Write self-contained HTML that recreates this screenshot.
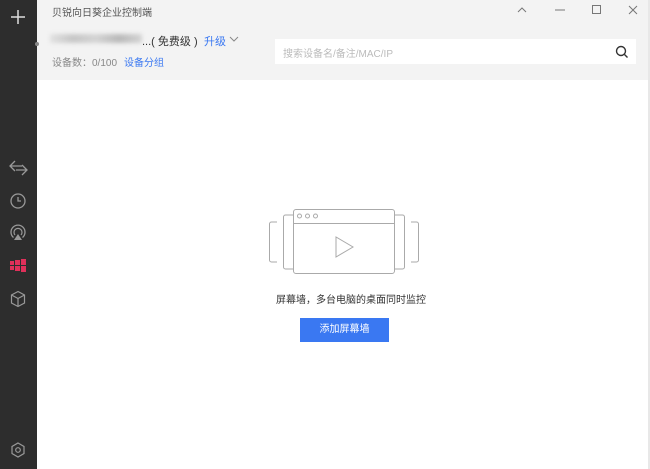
<!DOCTYPE html>
<html><head><meta charset="utf-8"><style>
*{margin:0;padding:0;box-sizing:border-box}
body{width:650px;height:469px;overflow:hidden;background:#fff;font-family:"Liberation Sans","Noto Sans CJK SC",sans-serif;position:relative}
.side{position:absolute;left:0;top:0;width:37px;height:469px;background:#2d2d2d}
.head{position:absolute;left:37px;top:0;width:613px;height:80px;background:#f3f3f3}
.t{position:absolute;font-size:10px;color:#555;white-space:nowrap}
svg{position:absolute}
</style></head><body>
<div class="side"></div>
<div class="head"></div>
<div style="position:absolute;left:648px;top:0;width:2px;height:469px;background:#e8e8e8"></div>
<svg style="left:10px;top:9px" width="16" height="16"><path d="M8 1v14M1 8h14" stroke="#ddd" stroke-width="1.5"/></svg>
<div style="position:absolute;left:35px;top:42px;width:4px;height:4px;border-radius:2px;background:#888"></div>
<div class="t" style="left:52px;top:4px;color:#555">贝锐向日葵企业控制端</div>
<div style="position:absolute;left:50px;top:34px;width:92px;height:9px;background:linear-gradient(90deg,#ddd,#bbb,#ccc,#aaa,#ccc);filter:blur(2px);opacity:.8"></div>
<div class="t" style="left:142px;top:33px;font-size:11px;color:#333">...( 免费级 )</div>
<div class="t" style="left:204px;top:33px;font-size:11px;color:#3a78f2">升级</div>
<svg style="left:229px;top:35px" width="10" height="8"><path d="M1 2l4 4 4-4" stroke="#888" fill="none"/></svg>
<div class="t" style="left:52px;top:54px;color:#888">设备数：0/100</div>
<div class="t" style="left:124px;top:54px;color:#3a78f2">设备分组</div>
<div style="position:absolute;left:275px;top:39px;width:361px;height:25px;background:#fff"></div>
<div class="t" style="left:283px;top:45px;color:#bbb">搜索设备名/备注/MAC/IP</div>
<svg style="left:615px;top:45px" width="14" height="14"><circle cx="6" cy="6" r="4.5" stroke="#333" stroke-width="1.4" fill="none"/><path d="M9.5 9.5l3 3" stroke="#333" stroke-width="1.4"/></svg>
<svg style="left:516px;top:5px" width="12" height="10"><path d="M2 7l4-4 4 4" stroke="#777" fill="none"/></svg>
<svg style="left:554px;top:5px" width="12" height="10"><path d="M1 5h10" stroke="#777"/></svg>
<svg style="left:591px;top:4px" width="12" height="12"><rect x="1.5" y="1.5" width="8" height="8" stroke="#777" fill="none"/></svg>
<svg style="left:627px;top:4px" width="12" height="12"><path d="M2 2l8 8M10 2l-8 8" stroke="#777"/></svg>
<svg style="left:8px;top:158px" width="22" height="20"><path d="M7 3L2 8l5 5M2 8h12M14 7l5 5-5 5M19 12H8" stroke="#999" stroke-width="1.3" fill="none"/></svg>
<svg style="left:9px;top:192px" width="18" height="18"><circle cx="9" cy="9" r="7" stroke="#999" stroke-width="1.3" fill="none"/><path d="M9 5v4h3" stroke="#999" stroke-width="1.3" fill="none"/></svg>
<svg style="left:9px;top:224px" width="18" height="18"><path d="M4.5 13.5A7 7 0 1 1 13.5 13.5" stroke="#999" stroke-width="1.3" fill="none"/><path d="M6 11A4 4 0 1 1 12 11" stroke="#999" stroke-width="1.2" fill="none"/><path d="M9 10l4 6H5z" fill="#999"/></svg>
<svg style="left:10px;top:259px" width="17" height="14"><g fill="#e0305a"><rect x="0" y="2" width="4" height="4"/><rect x="5" y="1" width="5" height="5"/><rect x="11" y="0" width="5" height="6"/><rect x="0" y="7" width="4" height="4"/><rect x="5" y="7" width="5" height="5"/><rect x="11" y="7" width="5" height="6"/></g></svg>
<svg style="left:9px;top:290px" width="18" height="18"><path d="M9 1.5l6.5 3.5v8L9 16.5 2.5 13V5z M2.5 5L9 8.5 15.5 5M9 8.5v8" stroke="#999" stroke-width="1.2" fill="none"/></svg>
<svg style="left:9px;top:441px" width="18" height="18"><path d="M9 2l6 3.5v7L9 16l-6-3.5v-7z" stroke="#999" stroke-width="1.2" fill="none"/><circle cx="9" cy="9" r="2.3" stroke="#999" stroke-width="1.2" fill="none"/></svg>
<svg style="left:268px;top:208px" width="152" height="70" fill="none" stroke="#aaa" stroke-width="1">
<path d="M9 14H3.5a2 2 0 0 0-2 2v36a2 2 0 0 0 2 2H9"/>
<path d="M25 7h-7.5a2 2 0 0 0-2 2v50a2 2 0 0 0 2 2H25"/>
<path d="M143 14h5.5a2 2 0 0 1 2 2v36a2 2 0 0 1-2 2H143"/>
<path d="M127 7h7.5a2 2 0 0 1 2 2v50a2 2 0 0 1-2 2H127"/>
<rect x="25.5" y="1.5" width="101" height="64" rx="2.5"/>
<path d="M25.5 15.5h101"/>
<circle cx="31.5" cy="8" r="2"/><circle cx="39.5" cy="8" r="2"/><circle cx="47.5" cy="8" r="2"/>
<path d="M68 29v20l17-10z"/>
</svg>
<div class="t" style="left:276px;top:291px;color:#333">屏幕墙，多台电脑的桌面同时监控</div>
<div style="position:absolute;left:300px;top:318px;width:89px;height:24px;background:#3a78f2;color:#fff;font-size:10px;text-align:center;line-height:24px">添加屏幕墙</div>
</body></html>
